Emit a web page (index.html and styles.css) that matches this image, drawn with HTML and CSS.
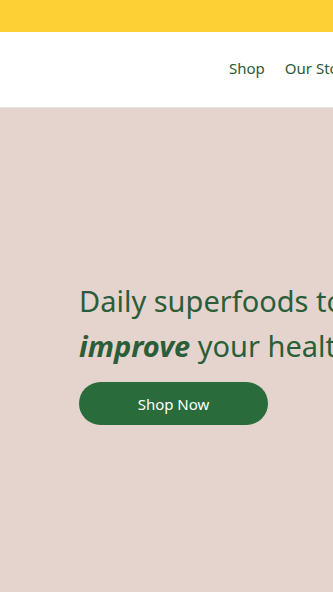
FILE: index.html
```html
<!DOCTYPE html>
<html lang="en">
<head>
<meta charset="utf-8">
<title>Superfoods</title>
<link rel="stylesheet" href="styles.css">
</head>
<body>
<div class="page">
  <div class="announce"></div>
  <header class="nav">
    <nav class="links">
      <a href="#">Shop</a>
      <a href="#">Our Story</a>
      <a href="#">Recipes</a>
    </nav>
  </header>
  <section class="hero">
    <div class="hero-content">
      <h1 class="title">Daily superfoods to<br><em>improve</em> your health</h1>
      <a class="btn" href="#">Shop Now</a>
    </div>
  </section>
</div>
</body>
</html>
```
FILE: styles.css
```css
* { box-sizing: border-box; }
html, body { margin: 0; padding: 0; }
body { overflow: hidden; font-family: "Noto Sans", "Liberation Sans", sans-serif; }
.page { width: 333px; height: 592px; display: flex; flex-direction: column; overflow: hidden; }
.announce { height: 32px; background: #fdd036; flex: none; }
.nav { height: 76px; background: #fff; flex: none; display: flex; align-items: center; padding-left: 229px; padding-bottom: 4px; border-bottom: 1px solid #ece4e2; }
.links { display: flex; gap: 20px; white-space: nowrap; }
.links a { color: #2c5a38; text-decoration: none; font-size: 15px; }
.hero { flex: 1; background: #e5d3cd; padding-left: 79px; display: flex; align-items: flex-start; padding-top: 170px; }
.hero-content { display: flex; flex-direction: column; align-items: flex-start; }
.title { margin: 0; font-weight: 400; font-size: 29px; line-height: 45px; color: #2b5e38; white-space: nowrap; letter-spacing: 0; }
.title em { font-weight: 700; font-style: italic; }
.btn { margin-top: 14px; width: 189px; height: 43px; border-radius: 22px; background: #2a6b3b; color: #fff; text-decoration: none; display: flex; align-items: center; justify-content: center; font-size: 15px; }
```
